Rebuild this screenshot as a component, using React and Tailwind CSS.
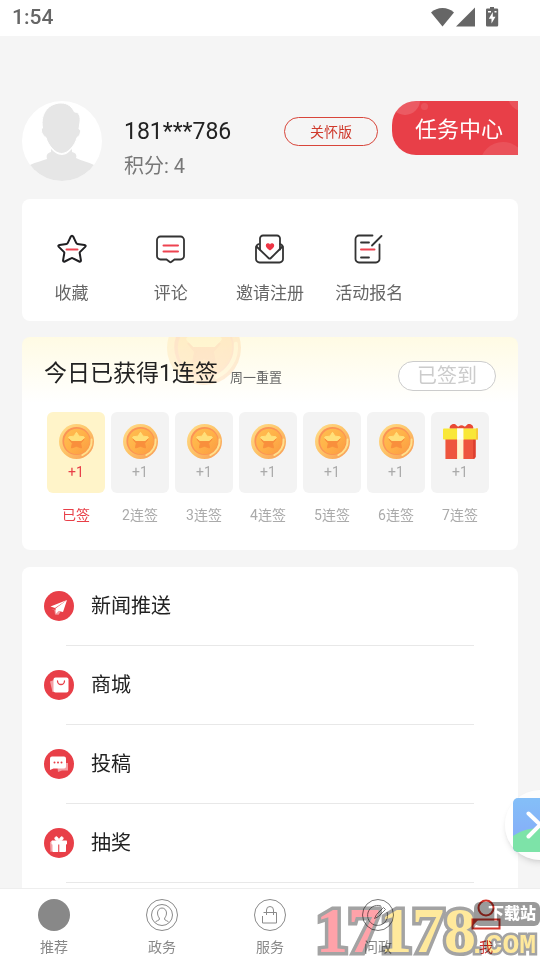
import { useState } from 'react';

const Coin = ({ className }) => (
  <svg viewBox="0 0 36 36" className={className} aria-hidden="true">
    <defs>
      <linearGradient id="coinRim" x1="0" y1="0" x2="1" y2="1">
        <stop offset="0" stopColor="#ffdf8c" />
        <stop offset="0.5" stopColor="#fdc266" />
        <stop offset="1" stopColor="#f89a58" />
      </linearGradient>
      <linearGradient id="coinFace" x1="0" y1="0" x2="1" y2="1">
        <stop offset="0" stopColor="#ffbf50" />
        <stop offset="0.5" stopColor="#ffb148" />
        <stop offset="1" stopColor="#fb9a42" />
      </linearGradient>
    </defs>
    <circle cx="18" cy="18" r="18" fill="url(#coinRim)" />
    <circle cx="18" cy="17.5" r="14.5" fill="#fb9355" />
    <circle cx="18.5" cy="18" r="13.200" fill="url(#coinFace)" />
    <path
      d="M33.500 16a15.800 15.800 0 0 1-9.500 16"
      fill="none"
      stroke="#ffe08c"
      strokeWidth="2"
      strokeLinecap="round"
    />
    <path
      d="M18 11l2.600 4.300 5 .6-3.300 3.800.9 5-5.200-1.700-5.200 1.700.9-5-3.300-3.800 5-.6z"
      fill="#f98f3c"
      stroke="#f98f3c"
      strokeLinejoin="round"
    />
    <path
      d="M18 8.500l2.600 4 5 .6c.6.1.7.6.3 1L23 17H13l-2.900-2.900c-.4-.4-.3-.9.300-1l5-.6z"
      fill="#ffe07a"
      stroke="#ffe07a"
      strokeLinejoin="round"
    />
  </svg>
);

const Gift = ({ className }) => (
  <svg viewBox="0 0 36 36" className={className} aria-hidden="true">
    <path
      d="M7 5a4 4 0 0 1 7-3.500 2 2 0 0 0 2 1 5 5 0 0 1 6 0 2 2 0 0 0 2-1A4 4 0 0 1 31 5z"
      fill="#e94a35"
    />
    <path d="M2.500 15h31v18.500a2.500 2.500 0 0 1-2.500 2.500H2.500z" fill="#ee553d" />
    <path d="M31 15h2.500v18.500A2.500 2.500 0 0 1 31 36z" fill="#dc3f30" />
    <rect x="0" y="4.500" width="36" height="11.500" rx="1" fill="#f9e738" />
    <rect x="34" y="4.500" width="2" height="11.500" fill="#f8c93c" />
    <rect x="14.500" y="15" width="6.500" height="21" fill="#fff3cf" />
    <rect x="14.500" y="4.500" width="6.500" height="11.500" fill="#fffef5" />
  </svg>
);

const StarIcon = () => (
  <svg viewBox="0 0 30 30" className="size-[30px]" fill="none" aria-hidden="true">
    <path
      d="M15 1.800c.6 0 1 .4 1.300 1l3 6.300c.3.500.6.800 1.100.8l7.100 1c1.200.2 1.500 1.200.7 2l-5.100 5c-.4.4-.5.800-.4 1.300l1.200 7c.2 1.200-.6 1.900-1.700 1.300l-6.200-3.200a2 2 0 0 0-2 0l-6.200 3.200c-1.100.6-1.900-.1-1.700-1.300l1.200-7c.1-.5 0-.9-.4-1.300l-5.100-5c-.8-.8-.5-1.800.7-2l7.100-1c.5 0 .8-.3 1.100-.8l3-6.300c.3-.6.7-1 1.300-1z"
      stroke="#1f1f22"
      strokeWidth="2"
    />
    <path d="M9.500 15.500h11" stroke="#ee4350" strokeWidth="2" strokeLinecap="round" />
  </svg>
);

const CommentIcon = () => (
  <svg viewBox="0 0 30 30" className="size-[30px]" fill="none" aria-hidden="true">
    <path
      d="M4.500 2.500h20A3.500 3.500 0 0 1 28 6v16a3.500 3.500 0 0 1-3.500 3.500h-6l-3 2.300a1.600 1.600 0 0 1-2 0l-3-2.300h-6A3.500 3.500 0 0 1 1 22V6a3.500 3.500 0 0 1 3.500-3.500z"
      stroke="#333"
      strokeWidth="1.800"
    />
    <path d="M7.500 11.500H22M7.500 17.500H22" stroke="#ee4350" strokeWidth="2" strokeLinecap="round" />
  </svg>
);

const InviteIcon = () => (
  <svg viewBox="0 0 30 30" className="size-[30px]" fill="none" aria-hidden="true">
    <g stroke="#333" strokeWidth="1.800" strokeLinejoin="round" strokeLinecap="round">
      <path d="M5 15.500V4.500a3 3 0 0 1 3-3h14a3 3 0 0 1 3 3v11" />
      <path d="M4 10a4 4 0 0 0-3 3.500V25a3.500 3.500 0 0 0 3.500 3.500h20A3.500 3.500 0 0 0 28 25V13.500a4 4 0 0 0-3-3.500" />
      <path d="M1.500 12.500l12 11.500a1.700 1.700 0 0 0 2.400 0l11.600-11.500" />
    </g>
    <path
      d="M15 16.500c-2.500-1.700-4.200-3.200-4.200-5a2.200 2.200 0 0 1 4.200-1 2.200 2.200 0 0 1 4.200 1c0 1.800-1.700 3.300-4.200 5z"
      fill="#ee3545"
    />
  </svg>
);

const SignUpIcon = () => (
  <svg viewBox="0 0 30 30" className="size-[30px]" fill="none" aria-hidden="true">
    <g stroke="#333" strokeWidth="1.800" strokeLinecap="round">
      <path d="M18.500 1.500H5A3.500 3.500 0 0 0 1.500 5v20A3.500 3.500 0 0 0 5 28.500h17a3.500 3.500 0 0 0 3.500-3.500V10.500" />
      <path d="M27.500 2L18 11.500M7 8.500h8M7 23.500h8" />
    </g>
    <path d="M7 15.500h13.500" stroke="#ee4350" strokeWidth="2" strokeLinecap="round" />
  </svg>
);

const PlaneGlyph = () => (
  <>
    <path d="M6.500 15.500L23 9l-12 8z" fill="#fff" />
    <path d="M23 9l-11.500 8.500.5 5 2.500-2.500 4.500 1z" fill="#fff" />
    <path d="M7.500 18l3 1.200.5 4.300 3.500.3 2-3-4-1.500z" fill="#fff" opacity="0.5" />
  </>
);

const BagGlyph = () => (
  <>
    <path d="M6 11.500l4-1.500v12H8.500z" fill="#fff" opacity="0.5" />
    <rect x="9.500" y="7.500" width="15" height="15" rx="2" fill="#fff" />
    <path d="M13.500 11a3.500 3.500 0 0 0 7 0" fill="none" stroke="#e83f48" strokeWidth="1.300" strokeLinecap="round" />
  </>
);

const ChatGlyph = () => (
  <>
    <path d="M13 14h11v7.500h-6l-4 1.500z" fill="#fff" opacity="0.5" />
    <path d="M8 7.500h12a2 2 0 0 1 2 2v8a2 2 0 0 1-2 2H9.500L6 21V9.500a2 2 0 0 1 2-2z" fill="#fff" />
    <circle cx="10.500" cy="13.500" r="1" fill="#e83f48" />
    <circle cx="14" cy="13.500" r="1" fill="#e83f48" />
    <circle cx="17.500" cy="13.500" r="1" fill="#e83f48" />
  </>
);

const PrizeGlyph = () => (
  <>
    <path d="M6 14l3-1.500v10.500l-2.500 1z" fill="#fff" opacity="0.5" />
    <rect x="7.500" y="12.500" width="15.500" height="4" rx="0.800" fill="#fff" />
    <path d="M8.500 15.500h5.700v8.500H8.500zM15.300 15.500H22v7.500a1 1 0 0 1-1 1h-5.700z" fill="#fff" />
    <path d="M15 13c-4-.5-5-2.200-3.500-4 1.500-1 3 1 3.500 4zM15 13c4-.5 5-2.200 3.500-4-1.500-1-3 1-3.500 4z" fill="#fff" stroke="#fff" />
  </>
);

const actions = [
  { label: '收藏', Icon: StarIcon },
  { label: '评论', Icon: CommentIcon },
  { label: '邀请注册', Icon: InviteIcon },
  { label: '活动报名', Icon: SignUpIcon },
];

const days = ['已签', '2连签', '3连签', '4连签', '5连签', '6连签', '7连签'];

const menu = [
  { label: '新闻推送', Glyph: PlaneGlyph },
  { label: '商城', Glyph: BagGlyph },
  { label: '投稿', Glyph: ChatGlyph },
  { label: '抽奖', Glyph: PrizeGlyph },
];

const tabs = [
  {
    label: '推荐',
    icon: <circle cx="16" cy="16" r="16" fill="#888" />,
  },
  {
    label: '政务',
    icon: (
      <g fill="none" stroke="#8a8a8a">
        <circle cx="16" cy="16" r="15.500" />
        <circle cx="16" cy="16" r="10.500" />
        <path d="M9 23.500c1-2 4.500-1.800 4.500-3.500 0-1.500-2-2.500-2-6a4.500 5 0 0 1 9 0c0 3.500-2 4.500-2 6 0 1.700 3.500 1.500 4.500 3.500" />
      </g>
    ),
  },
  {
    label: '服务',
    icon: (
      <g fill="none" stroke="#8a8a8a">
        <circle cx="16" cy="16" r="15.500" />
        <path d="M9.500 13.500h13v10.500h-14v-7M12.500 16v-5a3.500 3.500 0 0 1 7 0v5" />
      </g>
    ),
  },
  {
    label: '问政',
    icon: (
      <g fill="none" stroke="#777">
        <circle cx="16" cy="16" r="15.500" />
        <path d="M19 7a10 10 0 1 0 6 6" />
        <path d="M12.500 19.500l2-4 7-7 2 2-7 7z" />
      </g>
    ),
  },
  {
    label: '我',
    active: true,
    icon: (
      <g fill="none" stroke="#d0342a" strokeWidth="2">
        <circle cx="16" cy="9" r="7.500" />
        <path d="M2.500 20.500h27v9h-27z" />
        <path d="M3 26.500l5-5.500H3z" fill="#d0342a" stroke="none" />
      </g>
    ),
  },
];

const StatusBar = () => (
  <header className="flex h-9 shrink-0 items-center justify-between bg-white pr-10 pl-3 text-[#666]">
    <span className="text-[21px] font-medium">1:54</span>
    <svg viewBox="0 0 70 22" className="h-[22px] w-[70px]" fill="#666" aria-hidden="true">
      <path d="M1 5.500C7-.5 18-.5 24 5.500L12.500 19.500z" />
      <path d="M45 .5v19H26z" />
      <path d="M60 0h4v1.500h3a1.200 1.200 0 0 1 1.200 1.200v15.600a1.200 1.200 0 0 1-1.200 1.200H57.200a1.200 1.200 0 0 1-1.200-1.200V2.700a1.200 1.200 0 0 1 1.200-1.200H60z" />
      <path d="M62.800 5l-4 6.800h2.700v4.700l4-6.800h-2.700zM58 4h3v1.500h-3zM64.500 4h2v1.500h-2z" fill="#fff" />
    </svg>
  </header>
);

const Profile = () => (
  <section className="flex items-start">
    <svg viewBox="0 0 80 80" className="size-20 shrink-0" role="img" aria-label="头像">
      <clipPath id="avatarClip">
        <circle cx="40" cy="40" r="40" />
      </clipPath>
      <g clipPath="url(#avatarClip)">
        <rect width="80" height="80" fill="#fff" />
        <path
          d="M8 64c6-3 12-4 17-6-1-4 0-6 4-7v-3c3 3 7 6 11 6s7-3 10-6v3c4 1 5 3 4 6 6 3 12 4 18 7v18H8z"
          fill="#e6e6e6"
        />
        <path
          d="M20.500 27C18 11 28 2 39 2c7 0 11 4 13.500 9 5 0 6 5 5.500 10l-1 7c3 1 1 7-2 8.500-2 8-9 16-15.500 16S26 44 24 36.500c-4-2.500-6-8-3.500-9.500z"
          fill="#e6e6e6"
          stroke="#fff"
          strokeWidth="1"
        />
      </g>
    </svg>
    <div className="ml-[22px] flex-1 pt-4">
      <h1 className="text-[23px] leading-[30px] text-[#222]">181***786</h1>
      <p className="mt-1 text-xl leading-[30px] text-[#777]">积分: 4</p>
    </div>
    <button className="mt-4 h-[29px] w-[94px] rounded-full border border-[#d8453a] text-sm text-[#cf3a2c]">
      关怀版
    </button>
    <button className="relative ml-3.5 h-[54px] w-[126px] overflow-hidden rounded-l-3xl bg-[#e83f48] pt-0.5 pl-2 text-[22px] text-white">
      <span className="absolute -top-4 -left-0.5 size-[30px] rounded-full bg-white/15"></span>
      <span className="absolute top-0.5 left-[29px] size-[7px] rounded-full bg-white/10"></span>
      <span className="absolute -top-5 -right-5 size-[30px] rounded-full bg-white/10"></span>
      <span className="absolute top-[41px] -right-2 size-[46px] rounded-full bg-white/10"></span>
      <span className="relative">任务中心</span>
    </button>
  </section>
);

const CheckIn = () => (
  <section className="relative mt-4 overflow-hidden rounded-lg bg-white bg-[linear-gradient(#fffbe4,#fff_66px)] pt-5 pb-[25px]">
    <Coin className="absolute -top-[26px] left-[145px] size-[74px] opacity-20" />
    <div className="relative flex items-center px-[22px]">
      <h2 className="text-[23px] leading-8 text-[#222]">今日已获得1连签</h2>
      <span className="mt-2 ml-3 flex-1 text-[13px] text-[#666]">周一重置</span>
      <button className="mt-1 h-[30px] w-[98px] rounded-full border border-[#ccc] bg-white text-xl leading-7 text-[#ccc]">
        已签到
      </button>
    </div>
    <ul className="mt-[21px] grid grid-cols-7 gap-1.5 pr-[29px] pl-[25px] text-center text-sm">
      {days.map((day, index) => (
        <li key={day} className={index === 0 ? 'text-[#e83f48]' : 'text-[#aaa]'}>
          <div
            className={`flex h-[81px] flex-col items-center rounded-md pt-3 ${
              index === 0 ? 'bg-[#fff4c9]' : 'bg-[#f3f3f3]'
            }`}
          >
            {index === days.length - 1 ? (
              <Gift className="size-[35px]" />
            ) : (
              <Coin className="size-[35px]" />
            )}
            <span className="mt-[3px] leading-5">+1</span>
          </div>
          <p className="mt-3 leading-5">{day}</p>
        </li>
      ))}
    </ul>
  </section>
);

const Watermark = () => (
  <div
    className="pointer-events-none absolute right-0 bottom-0 h-[66px] w-[226px] mix-blend-multiply"
    aria-hidden="true"
  >
    <div className="absolute bottom-0 left-0.5 font-['Liberation_Serif',serif] text-[64px] leading-[58px] font-bold text-[#ffe99c] [-webkit-text-stroke:7px_#a3a3a3] [paint-order:stroke_fill]">
      <span className="text-[#ffa2a9]">17</span>178
    </div>
    <div className="absolute top-2 right-0 h-6 w-[66px] rounded-md bg-[#9a9a9a] pr-1 text-right text-base leading-6 font-black text-white">
      下载站
    </div>
    <div className="absolute right-1 bottom-0 font-['Liberation_Mono',monospace] text-[28px] leading-7 font-bold text-[#ffe99c] [-webkit-text-stroke:5px_#a3a3a3] [paint-order:stroke_fill]">
      .COM
    </div>
  </div>
);

const App = () => {
  const [floatOpen, setFloatOpen] = useState(true);

  return (
    <div className="relative flex h-screen flex-col overflow-hidden bg-[#f5f5f5] font-['Roboto','Noto_Sans_CJK_SC',sans-serif]">
      <StatusBar />

      <main className="flex-1 overflow-y-auto px-[22px] pt-[65px] [scrollbar-width:none]">
        <Profile />

        <section className="mt-[18px] grid grid-cols-5 rounded-lg bg-white pt-[35px] pb-[15px]">
          {actions.map(({ label, Icon }) => (
            <a key={label} href="#" className="flex flex-col items-center">
              <Icon />
              <span className="mt-[17px] text-[17px] leading-[25px] whitespace-nowrap text-[#666]">
                {label}
              </span>
            </a>
          ))}
        </section>

        <CheckIn />

        <section className="mt-[17px] rounded-t-lg bg-white pb-20">
          {menu.map(({ label, Glyph }) => (
            <div key={label}>
              <button className="flex h-[78px] w-full items-center px-[22px] text-xl text-[#222]">
                <svg viewBox="0 0 30 30" className="size-[30px]" aria-hidden="true">
                  <circle cx="15" cy="15" r="15" fill="#e83f48" />
                  <Glyph />
                </svg>
                <span className="ml-[17px]">{label}</span>
              </button>
              <hr className="mx-11 border-[#e8e8e8]" />
            </div>
          ))}
        </section>
      </main>

      {floatOpen && (
        <button
          className="absolute -right-[35px] bottom-[100px] flex size-[70px] items-center justify-center rounded-full bg-white/80 shadow-md"
          onClick={() => setFloatOpen(false)}
          aria-label="关闭"
        >
          <svg viewBox="0 0 54 54" className="size-[54px]" aria-hidden="true">
            <defs>
              <linearGradient id="sky" x1="0" y1="0" x2="0" y2="1">
                <stop offset="0" stopColor="#84bff8" />
                <stop offset="1" stopColor="#86a8f8" />
              </linearGradient>
              <clipPath id="skyClip">
                <rect width="54" height="54" rx="5" />
              </clipPath>
            </defs>
            <g clipPath="url(#skyClip)">
              <rect width="54" height="54" fill="url(#sky)" />
              <ellipse cx="27" cy="54" rx="36" ry="24" fill="#7de3a8" />
            </g>
            <path
              d="M15.500 15.500L39 38M15.500 38.500L27 27 39 16"
              stroke="#fff"
              strokeWidth="4"
              strokeLinecap="round"
              fill="none"
            />
          </svg>
        </button>
      )}

      <nav className="relative grid shrink-0 grid-cols-5 border-t border-[#eee] bg-white pt-2.5 pb-0.5">
        {tabs.map(({ label, icon, active }) => (
          <a
            key={label}
            href="#"
            className={`flex flex-col items-center text-sm ${
              active ? 'text-[#c9302c]' : 'text-[#888]'
            }`}
          >
            <svg viewBox="0 0 32 32" className="size-8" aria-hidden="true">
              {icon}
            </svg>
            <span className="mt-1.5 leading-[21px]">{label}</span>
          </a>
        ))}
        <Watermark />
      </nav>
    </div>
  );
};

export default App;
